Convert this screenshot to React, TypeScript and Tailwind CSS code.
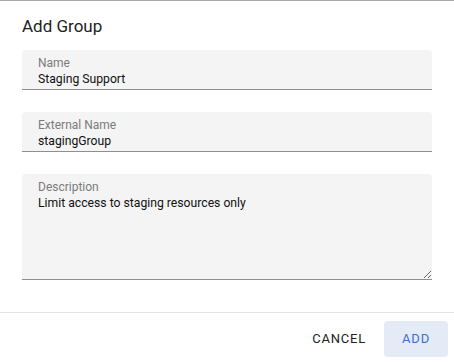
import React from "react";

function Field({ label, value }: { label: string; value: string }) {
  return (
    <div className="h-[40px] bg-[#f4f4f4] rounded-t-[4px] border-b border-[#8f8f8f] pl-4 pt-[6px] flex flex-col">
      <span className="text-[12px] leading-[14px] text-[#7b7b7b]">{label}</span>
      <span className="text-[12.2px] leading-[16px] text-[#111] mt-[1px]">{value}</span>
    </div>
  );
}

export default function App() {
  return (
    <div
      className="w-[454px] h-[362px] bg-white border-t border-[#aaaaaa] flex flex-col"
      style={{ fontFamily: "Roboto, 'Liberation Sans', sans-serif" }}
    >
      <div className="px-[22px] pt-[15px] pb-[14px]">
        <h2 className="text-[17px] leading-[20px] text-[#222]">Add Group</h2>
      </div>
      <div className="px-[22px] flex flex-col gap-[22px]">
        <Field label="Name" value="Staging Support" />
        <Field label="External Name" value="stagingGroup" />
        <div className="h-[106px] bg-[#f4f4f4] rounded-t-[4px] border-b border-[#8f8f8f] pt-[6px] flex flex-col">
          <span className="pl-4 text-[12px] leading-[14px] text-[#7b7b7b]">Description</span>
          <textarea
            readOnly
            defaultValue="Limit access to staging resources only"
            className="flex-1 pl-4 pt-0 text-[12.2px] leading-[16px] text-[#111] bg-transparent outline-none resize-y mt-[1px]"
            style={{ fontFamily: "Roboto, 'Liberation Sans', sans-serif" }}
          />
        </div>
      </div>
      <div className="mt-[32px] border-t border-[#e3e3e3] flex justify-end items-start pt-[8px] pr-[6px] gap-[10px]">
        <button className="h-[36px] px-[8px] text-[13px] font-normal tracking-[0.8px] text-[#222] rounded-[4px]">
          CANCEL
        </button>
        <button className="h-[36px] w-[64px] text-[13px] font-normal tracking-[0.8px] text-[#3b6fd1] bg-[#e4eaf6] rounded-[4px]">
          ADD
        </button>
      </div>
    </div>
  );
}
